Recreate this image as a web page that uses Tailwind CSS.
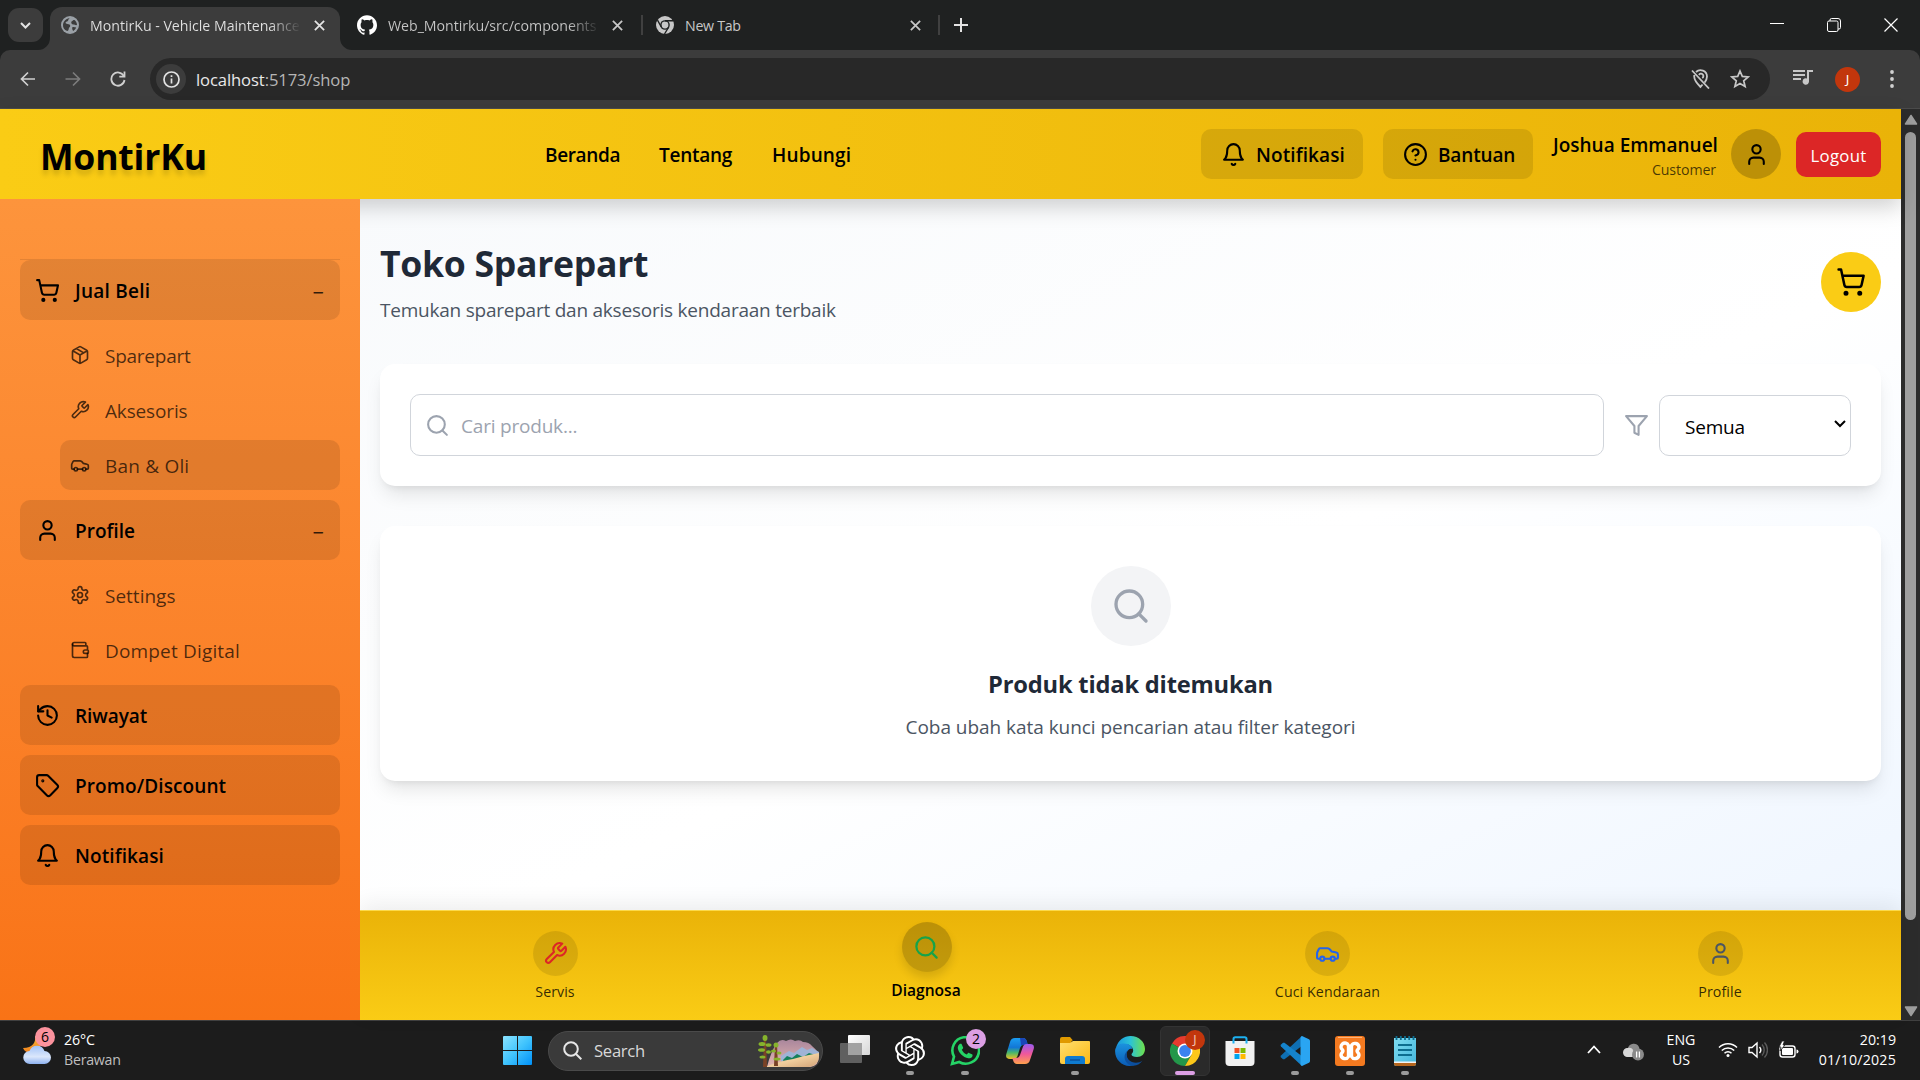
<!DOCTYPE html>
<html lang="id">
<head>
<meta charset="utf-8">
<title>MontirKu - Vehicle Maintenance</title>
<script src="https://cdn.jsdelivr.net/npm/@tailwindcss/browser@4"></script>
</head>
<body class="flex h-[1080px] w-[1920px] flex-col overflow-hidden bg-[#1c1c1c] font-['Open_Sans','Noto_Sans',sans-serif] text-[19px] leading-[30px] text-black">
<svg class="absolute size-0">
  <defs>
    <symbol id="bell" viewBox="0 0 24 24"><path d="M6 8a6 6 0 0 1 12 0c0 7 3 9 3 9H3s3-2 3-9"/><path d="M10.3 21a1.94 1.94 0 0 0 3.4 0"/></symbol>
    <symbol id="help" viewBox="0 0 24 24"><circle cx="12" cy="12" r="10"/><path d="M9.09 9a3 3 0 0 1 5.83 1c0 2-3 3-3 3M12 17h.01"/></symbol>
    <symbol id="user" viewBox="0 0 24 24"><path d="M19 21v-2a4 4 0 0 0-4-4H9a4 4 0 0 0-4 4v2"/><circle cx="12" cy="7" r="4"/></symbol>
    <symbol id="cart" viewBox="0 0 24 24"><circle cx="8" cy="21" r="1"/><circle cx="19" cy="21" r="1"/><path d="M2.05 2.05h2l2.66 12.42a2 2 0 0 0 2 1.58h9.78a2 2 0 0 0 1.95-1.57l1.65-7.43H5.12"/></symbol>
    <symbol id="package" viewBox="0 0 24 24"><path d="m7.5 4.27 9 5.15M21 8a2 2 0 0 0-1-1.73l-7-4a2 2 0 0 0-2 0l-7 4A2 2 0 0 0 3 8v8a2 2 0 0 0 1 1.73l7 4a2 2 0 0 0 2 0l7-4A2 2 0 0 0 21 16ZM3.3 7l8.7 5 8.7-5M12 22V12"/></symbol>
    <symbol id="wrench" viewBox="0 0 24 24"><path d="M14.7 6.3a1 1 0 0 0 0 1.4l1.6 1.6a1 1 0 0 0 1.4 0l3.77-3.77a6 6 0 0 1-7.94 7.94l-6.91 6.91a2.12 2.12 0 0 1-3-3l6.91-6.91a6 6 0 0 1 7.94-7.94l-3.76 3.76z"/></symbol>
    <symbol id="car" viewBox="0 0 24 24"><path d="M19 17h2c.6 0 1-.4 1-1v-3c0-.9-.7-1.7-1.5-1.9C18.7 10.6 16 10 16 10s-1.3-1.4-2.2-2.3c-.5-.4-1.1-.7-1.8-.7H5c-.6 0-1.1.4-1.4.9l-1.4 2.9A3.7 3.7 0 0 0 2 12v4c0 .6.4 1 1 1h2M9 17h6"/><circle cx="7" cy="17" r="2"/><circle cx="17" cy="17" r="2"/></symbol>
    <symbol id="settings" viewBox="0 0 24 24"><path d="M12.22 2h-.44a2 2 0 0 0-2 2v.18a2 2 0 0 1-1 1.73l-.43.25a2 2 0 0 1-2 0l-.15-.08a2 2 0 0 0-2.73.73l-.22.38a2 2 0 0 0 .73 2.73l.15.1a2 2 0 0 1 1 1.72v.51a2 2 0 0 1-1 1.74l-.15.09a2 2 0 0 0-.73 2.73l.22.38a2 2 0 0 0 2.73.73l.15-.08a2 2 0 0 1 2 0l.43.25a2 2 0 0 1 1 1.73V20a2 2 0 0 0 2 2h.44a2 2 0 0 0 2-2v-.18a2 2 0 0 1 1-1.73l.43-.25a2 2 0 0 1 2 0l.15.08a2 2 0 0 0 2.73-.73l.22-.39a2 2 0 0 0-.73-2.73l-.15-.08a2 2 0 0 1-1-1.74v-.5a2 2 0 0 1 1-1.74l.15-.09a2 2 0 0 0 .73-2.73l-.22-.38a2 2 0 0 0-2.73-.73l-.15.08a2 2 0 0 1-2 0l-.43-.25a2 2 0 0 1-1-1.73V4a2 2 0 0 0-2-2z"/><circle cx="12" cy="12" r="3"/></symbol>
    <symbol id="wallet" viewBox="0 0 24 24"><path d="M19 7V4a1 1 0 0 0-1-1H5a2 2 0 0 0 0 4h15a1 1 0 0 1 1 1v4h-3a2 2 0 0 0 0 4h3a1 1 0 0 0 1-1v-2a1 1 0 0 0-1-1"/><path d="M3 5v14a2 2 0 0 0 2 2h15a1 1 0 0 0 1-1v-4"/></symbol>
    <symbol id="history" viewBox="0 0 24 24"><path d="M3 12a9 9 0 1 0 9-9 9.75 9.75 0 0 0-6.74 2.74L3 8"/><path d="M3 3v5h5M12 7v5l4 2"/></symbol>
    <symbol id="tag" viewBox="0 0 24 24"><path d="M12.586 2.586A2 2 0 0 0 11.172 2H4a2 2 0 0 0-2 2v7.172a2 2 0 0 0 .586 1.414l8.704 8.704a2.426 2.426 0 0 0 3.42 0l6.58-6.58a2.426 2.426 0 0 0 0-3.42z"/><circle cx="7.5" cy="7.5" r=".5" fill="currentColor"/></symbol>
    <symbol id="search" viewBox="0 0 24 24"><circle cx="11" cy="11" r="8"/><path d="m21 21-4.3-4.3"/></symbol>
    <symbol id="filter" viewBox="0 0 24 24"><path d="M22 3H2l8 9.46V19l4 2v-8.54z"/></symbol>
    <symbol id="x" viewBox="0 0 10 10"><path d="m.8.8 8.4 8.4M9.2.8.8 9.2"/></symbol>
    <linearGradient id="gWin" x1="0" y1="0" x2="1" y2="1"><stop stop-color="#8be3ff"/><stop offset=".5" stop-color="#41c4fd"/><stop offset="1" stop-color="#0091f8"/></linearGradient>
    <linearGradient id="gTv" x1="0" y1="0" x2="1" y2="1"><stop stop-color="#fff"/><stop offset="1" stop-color="#d6d6d6"/></linearGradient>
    <linearGradient id="gCpA" x1="0" y1="0" x2="0" y2="1"><stop stop-color="#1b9df2"/><stop offset=".45" stop-color="#1277d6"/><stop offset=".7" stop-color="#49b86a"/><stop offset="1" stop-color="#f2c021"/></linearGradient>
    <linearGradient id="gCpB" x1="0" y1="0" x2="0" y2="1"><stop stop-color="#9a5bf0"/><stop offset=".5" stop-color="#f0589a"/><stop offset="1" stop-color="#ffa14d"/></linearGradient>
    <linearGradient id="gFold" x1="0" y1="0" x2="1" y2="1"><stop stop-color="#ffdf70"/><stop offset="1" stop-color="#fcb813"/></linearGradient>
    <linearGradient id="gEdge" x1="0" y1="0" x2="1" y2="0"><stop stop-color="#1795e0"/><stop offset=".5" stop-color="#2cc3d5"/><stop offset="1" stop-color="#6fe04a"/></linearGradient>
    <linearGradient id="gEdge2" x1="0" y1="0" x2="0" y2="1"><stop stop-color="#1b92de"/><stop offset="1" stop-color="#0a5bb5"/></linearGradient>
    <linearGradient id="gNote" x1="0" y1="0" x2="1" y2="1"><stop stop-color="#7fdcf0"/><stop offset="1" stop-color="#43b6dc"/></linearGradient>
    <linearGradient id="gCloud" x1="0" y1="0" x2="0" y2="1"><stop stop-color="#a3c4f8"/><stop offset=".6" stop-color="#dbe7fb"/><stop offset="1" stop-color="#8eb2f0"/></linearGradient>
    <linearGradient id="gMoon" x1="0" y1="0" x2="0" y2="1"><stop stop-color="#f9b83b"/><stop offset="1" stop-color="#f07f1a"/></linearGradient>
    <linearGradient id="gSky" x1="0" y1="0" x2="0" y2="1"><stop stop-color="#a9869c"/><stop offset="1" stop-color="#e6b7b0"/></linearGradient>
    <linearGradient id="gSand" x1="0" y1="0" x2="1" y2="1"><stop stop-color="#b98a63"/><stop offset=".5" stop-color="#f1cf9f"/><stop offset="1" stop-color="#d2a377"/></linearGradient>
  </defs>
</svg>

<!-- Browser tab strip -->
<div class="flex h-[50px] shrink-0 items-start bg-[#1f2121] text-[14.2px] leading-5 text-[#c7c7c7]">
  <div class="ml-2 mt-2 flex h-[34px] w-[35px] items-center justify-center rounded-[11px] bg-[#3c3c3c]">
    <svg class="h-[7px] w-[11px] fill-none stroke-[#e3e3e3] stroke-2" viewBox="0 0 11 7"><path d="m1 1 4.5 4.5L10 1"/></svg>
  </div>
  <div class="relative ml-[7px] mt-[7px] flex h-[43px] w-[290px] items-center rounded-t-[12px] bg-[#3c3c3c] pb-[7px] pl-[11px] pr-[15px] text-[#e3e3e3]">
    <svg class="absolute -left-3 bottom-0 size-3 fill-[#3c3c3c]" viewBox="0 0 12 12"><path d="M12 0v12H0A12 12 0 0 0 12 0"/></svg>
    <svg class="absolute -right-3 bottom-0 size-3 fill-[#3c3c3c]" viewBox="0 0 12 12"><path d="M0 0v12h12A12 12 0 0 1 0 0"/></svg>
    <svg class="size-[18px] shrink-0" viewBox="0 0 18 18"><circle cx="9" cy="9" r="9" fill="#9aa0a6"/><path d="M9 2.2C6.500 3 8 4.800 6 5.500c-2 .4-1.800 2.200.4 2.400 1.800.2 3 .6 2.800 2 0 1.200-1.300 1-1.400 2.600 0 1.200-.8 2.300-1.500 2.600C3 14 1.800 11.500 2 8.500c.5-3.700 3.500-6.300 7-6.300M10.500 5.500c1.500-.8 1.600-1.600 3-1.400 1.500 1.400 2.500 3 2.500 5-1.500.5-2.500-.6-3.600-.6-1.700 0-2.700-1.800-1.900-3M11.600 11c1.200-.4 2.400.3 3.600.5-.6 1.500-1.700 2.700-3 3.400-1-.9-1.400-3.200-.6-3.900" fill="#3c3c3c"/></svg>
    <span class="ml-[11px] w-[211px] overflow-hidden whitespace-nowrap bg-linear-to-r from-[#e3e3e3] from-85% to-transparent bg-clip-text pt-[2px] tracking-[-0.03px] text-transparent">MontirKu - Vehicle Maintenance</span>
    <svg class="ml-auto size-[11px] stroke-current stroke-[1.6]"><use href="#x"/></svg>
  </div>
  <div class="flex h-[50px] w-[301px] items-center pl-[17px] pr-[18px]">
    <svg class="size-5 shrink-0 fill-white" viewBox="0 0 24 24"><path d="M12 .297c-6.630 0-12 5.373-12 12 0 5.303 3.438 9.800 8.205 11.385.6.113.82-.258.82-.577 0-.285-.01-1.040-.015-2.040-3.338.724-4.042-1.610-4.042-1.610C4.422 18.070 3.633 17.700 3.633 17.700c-1.087-.744.084-.729.084-.729 1.205.084 1.838 1.236 1.838 1.236 1.070 1.835 2.809 1.305 3.495.998.108-.776.417-1.305.76-1.605-2.665-.3-5.466-1.332-5.466-5.930 0-1.310.465-2.380 1.235-3.220-.135-.303-.54-1.523.105-3.176 0 0 1.005-.322 3.300 1.230.96-.267 1.980-.399 3-.405 1.020.006 2.040.138 3 .405 2.280-1.552 3.285-1.230 3.285-1.230.645 1.653.24 2.873.12 3.176.765.84 1.230 1.910 1.230 3.220 0 4.610-2.805 5.625-5.475 5.920.42.36.81 1.096.81 2.220 0 1.606-.015 2.896-.015 3.286 0 .315.21.69.825.57C20.565 22.092 24 17.592 24 12.297c0-6.627-5.373-12-12-12"/></svg>
    <span class="ml-[11px] w-[212px] overflow-hidden whitespace-nowrap bg-linear-to-r from-[#c7c7c7] from-85% to-transparent bg-clip-text pt-[2px] tracking-[-0.03px] text-transparent">Web_Montirku/src/components</span>
    <svg class="ml-auto size-[11px] stroke-current stroke-[1.6]"><use href="#x"/></svg>
  </div>
  <div class="mt-[15px] h-5 w-[2px] bg-[#404040]"></div>
  <div class="flex h-[50px] w-[295px] items-center pl-[13px] pr-[17px]">
    <svg class="size-[18px]" viewBox="0 0 18 18"><circle cx="9" cy="9" r="9" fill="#c7c7c7"/><circle cx="9" cy="9" r="4.8" fill="#1f2121"/><circle cx="9" cy="9" r="3.4" fill="#c7c7c7"/><path d="M9 4.800h8M5.300 11 1.500 4.200M12.700 11l-4.200 7" stroke="#1f2121" stroke-width="1.400"/></svg>
    <span class="ml-[11px] pt-[2px] tracking-[-0.3px]">New Tab</span>
    <svg class="ml-auto size-[11px] stroke-current stroke-[1.6]"><use href="#x"/></svg>
  </div>
  <div class="mt-[15px] h-5 w-[2px] bg-[#404040]"></div>
  <svg class="ml-[14px] mt-[18px] size-[14px] stroke-[#e3e3e3] stroke-2" viewBox="0 0 14 14"><path d="M7 0v14M0 7h14"/></svg>
  <div class="ml-auto flex h-[50px] items-center gap-[43px] pr-[22px]">
    <svg class="h-[14px] w-[14px] stroke-white" viewBox="0 0 14 14"><path d="M0 5.500h14"/></svg>
    <svg class="size-[14px] fill-none stroke-white" viewBox="0 0 14 14"><rect x=".5" y="3" width="10.500" height="10.500" rx="1.500"/><path d="M3 3V2A1.500 1.500 0 0 1 4.500.5H11A2.500 2.500 0 0 1 13.500 3v6.500A1.500 1.500 0 0 1 12 11h-1"/></svg>
    <svg class="size-[14px] stroke-white stroke-[1.2]" viewBox="0 0 14 14"><path d="m.5.5 13 13M13.500.5l-13 13"/></svg>
  </div>
</div>

<!-- Address bar -->
<div class="shrink-0 bg-[#1f2121]">
  <div class="flex h-[59px] items-start rounded-t-[10px] border-b border-[#4b4b4b] bg-[#3c3c3c] pt-2">
    <div class="flex h-[42px] w-[150px] items-center gap-[29px] pl-[20px]">
      <svg class="size-4 fill-none stroke-[#d0d0d0] stroke-[1.7]" viewBox="0 0 16 16"><path d="M15 8H1.500M8 1.500 1.500 8 8 14.500"/></svg>
      <svg class="size-4 fill-none stroke-[#7c7c7c] stroke-[1.7]" viewBox="0 0 16 16"><path d="M.5 8h14M8 1.500 14.500 8 8 14.500"/></svg>
      <svg class="size-4 fill-none stroke-[#d0d0d0] stroke-[1.8]" viewBox="0 0 16 16"><path d="M13.800 5A6.600 6.600 0 1 0 14.500 9"/><path d="M14.500.5v5.200H9.300"/></svg>
    </div>
    <div class="flex h-[42px] w-[1620px] items-center rounded-full bg-[#282828] pl-[6px] pr-5">
      <div class="flex size-[30px] items-center justify-center rounded-full bg-[#3c3c3c]">
        <svg class="size-[17px] fill-none stroke-[#e3e3e3] stroke-[1.7]" viewBox="0 0 17 17"><circle cx="8.500" cy="8.500" r="7.500"/><path d="M8.500 7.500v5M8.500 4.300V6"/></svg>
      </div>
      <span class="ml-[10px] pt-px text-[16.6px] tracking-[-0.1px] text-[#e8e8e8]">localhost<span class="text-[#b6b6b6]">:5173/shop</span></span>
      <svg class="ml-auto h-5 w-[19px] fill-none stroke-[#c7c7c7] stroke-[1.8]" viewBox="0 0 19 20"><path d="M5 3A6.500 6.500 0 0 1 16 7.500c0 2-.9 4-2.300 6M11.500 15.500l-2 2.500C6 14.500 3.200 11 3.200 7.500L3.300 6M1 1.500l17 18M8 6a2.300 2.300 0 1 1 3.200 3"/></svg>
      <svg class="ml-5 size-5 fill-none stroke-[#c7c7c7] stroke-[1.7]" viewBox="0 0 20 20"><path d="m10 2 2.300 5.400 5.900.5-4.500 3.900 1.400 5.700-5.100-3-5.100 3 1.400-5.700-4.500-3.900 5.900-.5z"/></svg>
    </div>
    <div class="flex h-[42px] items-center pl-[23px]">
      <svg class="mb-1 h-4 w-5 fill-[#c7c7c7]" viewBox="0 0 20 16"><path d="M0 1h12v2H0zM0 5h12v2H0zM0 9h8v2H0zM14 1h6v2h-4v9.500a3.200 3.200 0 1 1-2-3z"/></svg>
      <div class="ml-[22px] flex size-[25px] items-center justify-center rounded-full bg-[#c2360c] font-['Noto_Sans'] text-[13px] leading-4 text-white">J</div>
      <svg class="ml-[30px] h-[18px] w-1 fill-[#d0d0d0]" viewBox="0 0 4 18"><circle cx="2" cy="2" r="1.900"/><circle cx="2" cy="9" r="1.900"/><circle cx="2" cy="16" r="1.900"/></svg>
    </div>
  </div>
</div>

<!-- Page viewport -->
<div class="flex h-[911px] shrink-0">
  <div class="flex w-[1901px] flex-col">
    <header class="relative z-10 flex h-[90px] shrink-0 items-center bg-linear-to-r from-[#facc15] to-[#eab308] pl-[40px] pr-5 font-[560] shadow-[0_8px_20px_rgba(0,0,0,0.18)]">
      <div class="w-[505px] pt-1 text-[35.6px] font-bold tracking-[-0.2px] text-shadow-[0_5px_5px_rgba(0,0,0,0.15)]">MontirKu</div>
      <nav class="flex gap-10 pt-[2px]">
        <a class="w-[74px] whitespace-nowrap tracking-[-0.35px]">Beranda</a>
        <a class="w-[73px] whitespace-nowrap tracking-[-0.25px]">Tentang</a>
        <a class="whitespace-nowrap tracking-[0.15px]">Hubungi</a>
      </nav>
      <div class="ml-auto flex items-center">
        <div class="flex h-[50px] w-[162px] items-center gap-[10px] rounded-[10px] bg-black/10 pl-5"><svg class="size-[25px] fill-none stroke-current stroke-2 [stroke-linecap:round] [stroke-linejoin:round]"><use href="#bell"/></svg><span class="pt-[2px] tracking-[0.1px]">Notifikasi</span></div>
        <div class="ml-5 flex h-[50px] w-[150px] items-center gap-[10px] rounded-[10px] bg-black/10 pl-5"><svg class="size-[25px] fill-none stroke-current stroke-2 [stroke-linecap:round] [stroke-linejoin:round]"><use href="#help"/></svg><span class="pt-[2px] tracking-[-0.15px]">Bantuan</span></div>
        <div class="ml-5 w-[163px] whitespace-nowrap pt-[2px] text-right">
          <div>Joshua Emmanuel</div>
          <div class="text-[14.2px] font-normal leading-5 tracking-[-0.1px] text-black/70">Customer</div>
        </div>
        <div class="ml-[15px] flex size-[50px] items-center justify-center rounded-full bg-black/20"><svg class="size-[25px] fill-none stroke-current stroke-2 [stroke-linecap:round] [stroke-linejoin:round]"><use href="#user"/></svg></div>
        <div class="ml-[15px] flex h-[45px] w-[85px] items-center justify-center rounded-[10px] bg-[#dc2626] pt-[3px] text-[16.8px] font-normal tracking-[0.25px] text-white">Logout</div>
      </div>
    </header>
    <div class="flex min-h-0 flex-1">
      <aside class="relative z-20 flex w-[360px] shrink-0 flex-col bg-linear-to-b from-[#fd943c] to-[#f97316] px-5 pt-[60px] font-[560]">
        <div class="h-px bg-black/10"></div>
        <div class="flex h-[60px] items-center rounded-[10px] bg-black/10 px-[15px]"><svg class="size-[25px] fill-none stroke-current stroke-2 [stroke-linecap:round] [stroke-linejoin:round]"><use href="#cart"/></svg><span class="ml-[15px] pt-[2px] tracking-[0.25px]">Jual Beli</span><span class="ml-auto mr-px pt-[5px] text-[20px] font-normal text-black/80">−</span></div>
        <div class="my-[10px] ml-10 flex flex-col gap-[5px] font-normal text-black/70">
          <div class="flex h-[50px] items-center pl-[10px]"><svg class="size-5 fill-none stroke-current stroke-2 [stroke-linecap:round] [stroke-linejoin:round]"><use href="#package"/></svg><span class="ml-[15px] pt-[2px] tracking-[-0.25px]">Sparepart</span></div>
          <div class="flex h-[50px] items-center pl-[10px]"><svg class="size-5 fill-none stroke-current stroke-2 [stroke-linecap:round] [stroke-linejoin:round]"><use href="#wrench"/></svg><span class="ml-[15px] pt-[2px] tracking-[-0.15px]">Aksesoris</span></div>
          <div class="flex h-[50px] items-center rounded-[10px] bg-black/10 pl-[10px]"><svg class="size-5 fill-none stroke-current stroke-2 [stroke-linecap:round] [stroke-linejoin:round]"><use href="#car"/></svg><span class="ml-[15px] pt-[2px] tracking-[0.2px]">Ban &amp; Oli</span></div>
        </div>
        <div class="flex h-[60px] items-center rounded-[10px] bg-black/10 px-[15px]"><svg class="size-[25px] fill-none stroke-current stroke-2 [stroke-linecap:round] [stroke-linejoin:round]"><use href="#user"/></svg><span class="ml-[15px] pt-[2px]">Profile</span><span class="ml-auto mr-px pt-[5px] text-[20px] font-normal text-black/80">−</span></div>
        <div class="my-[10px] ml-10 flex flex-col gap-[5px] font-normal text-black/70">
          <div class="flex h-[50px] items-center pl-[10px]"><svg class="size-5 fill-none stroke-current stroke-2 [stroke-linecap:round] [stroke-linejoin:round]"><use href="#settings"/></svg><span class="ml-[15px] pt-[2px]">Settings</span></div>
          <div class="flex h-[50px] items-center pl-[10px]"><svg class="size-5 fill-none stroke-current stroke-2 [stroke-linecap:round] [stroke-linejoin:round]"><use href="#wallet"/></svg><span class="ml-[15px] pt-[2px] tracking-[0.17px]">Dompet Digital</span></div>
        </div>
        <div class="flex flex-col gap-[10px]">
          <div class="flex h-[60px] items-center rounded-[10px] bg-black/10 px-[15px]"><svg class="size-[25px] fill-none stroke-current stroke-2 [stroke-linecap:round] [stroke-linejoin:round]"><use href="#history"/></svg><span class="ml-[15px] pt-[2px] tracking-[-0.05px]">Riwayat</span></div>
          <div class="flex h-[60px] items-center rounded-[10px] bg-black/10 px-[15px]"><svg class="size-[25px] fill-none stroke-current stroke-2 [stroke-linecap:round] [stroke-linejoin:round]"><use href="#tag"/></svg><span class="ml-[15px] pt-[2px] tracking-[0.1px]">Promo/Discount</span></div>
          <div class="flex h-[60px] items-center rounded-[10px] bg-black/10 px-[15px]"><svg class="size-[25px] fill-none stroke-current stroke-2 [stroke-linecap:round] [stroke-linejoin:round]"><use href="#bell"/></svg><span class="ml-[15px] pt-[2px] tracking-[0.1px]">Notifikasi</span></div>
        </div>
      </aside>
      <div class="flex flex-1 flex-col">
        <main class="flex-1 bg-linear-to-br from-[#f8fafc] via-white via-55% to-[#eff6ff] px-5 pt-10">
          <div class="flex h-[85px] items-center justify-between">
            <div class="pt-[3px]">
              <h1 class="mb-[9px] text-[35.6px] font-bold leading-[45px] tracking-[-0.3px] text-[#1f2937]">Toko Sparepart</h1>
              <p class="tracking-[-0.23px] text-[#4b5563]">Temukan sparepart dan aksesoris kendaraan terbaik</p>
            </div>
            <div class="flex size-[60px] items-center justify-center rounded-full bg-[#facc15]"><svg class="size-[30px] fill-none stroke-current stroke-2 [stroke-linecap:round] [stroke-linejoin:round]"><use href="#cart"/></svg></div>
          </div>
          <div class="mt-10 flex h-[122px] items-center rounded-[15px] bg-white px-[30px] shadow-[0_12px_19px_-4px_rgba(0,0,0,0.1),0_5px_8px_-5px_rgba(0,0,0,0.1)]">
            <div class="flex h-[62px] w-[1194px] items-center rounded-[10px] border border-[#d1d5db] pl-[14px] text-[#9ca3af]">
              <svg class="size-[25px] fill-none stroke-current stroke-2 [stroke-linecap:round] [stroke-linejoin:round]"><use href="#search"/></svg>
              <span class="ml-[11px] pt-[2px] tracking-[-0.2px]">Cari produk...</span>
            </div>
            <svg class="ml-5 size-[25px] fill-none stroke-[#9ca3af] stroke-2 [stroke-linecap:round] [stroke-linejoin:round]"><use href="#filter"/></svg>
            <div class="ml-[10px] mt-px flex h-[61px] w-[192px] items-center justify-between rounded-[10px] border border-[#d1d5db] pl-[25px] pr-1">
              <span class="pt-[2px] tracking-[-0.2px]">Semua</span>
              <svg class="mb-1 h-[8px] w-3 fill-none stroke-black stroke-2" viewBox="0 0 12 8"><path d="m1 1 5 5 5-5"/></svg>
            </div>
          </div>
          <div class="mt-10 flex h-[255px] flex-col items-center rounded-[15px] bg-white pt-10 shadow-[0_12px_19px_-4px_rgba(0,0,0,0.1),0_5px_8px_-5px_rgba(0,0,0,0.1)]">
            <div class="flex size-20 items-center justify-center rounded-full bg-[#f3f4f6]"><svg class="size-10 fill-none stroke-[#9ca3af] stroke-2 [stroke-linecap:round] [stroke-linejoin:round]"><use href="#search"/></svg></div>
            <h3 class="mt-[21px] text-[23.7px] font-bold leading-[35px] tracking-[-0.2px] text-[#1f2937]">Produk tidak ditemukan</h3>
            <p class="mt-[10px] tracking-[-0.04px] text-[#4b5563]">Coba ubah kata kunci pencarian atau filter kategori</p>
          </div>
        </main>
        <div class="relative grid h-[110px] shrink-0 grid-cols-[390px_352px_451px_334px] border-t border-[#fbd94a] bg-linear-to-b from-[#eab308] to-[#facc15] pt-5 text-[14.2px] font-medium leading-5 text-black/80 shadow-[0_-6px_20px_rgba(0,0,0,0.07)]">
          <div class="flex flex-col items-center"><div class="flex size-[45px] items-center justify-center rounded-full bg-black/10"><svg class="size-[25px] fill-none stroke-[#dc2626] stroke-2 [stroke-linecap:round] [stroke-linejoin:round]"><use href="#wrench"/></svg></div><span class="mt-[6px] tracking-[0.05px]">Servis</span></div>
          <div class="-mt-[9px] flex flex-col items-center text-black"><div class="ml-px flex size-[50px] items-center justify-center rounded-full bg-black/20 shadow-[0_6px_10px_rgba(0,0,0,0.12)]"><svg class="size-[27px] fill-none stroke-[#16a34a] stroke-2 [stroke-linecap:round] [stroke-linejoin:round]"><use href="#search"/></svg></div><span class="mt-[8px] text-[15.6px] font-[550]">Diagnosa</span></div>
          <div class="flex flex-col items-center"><div class="flex size-[45px] items-center justify-center rounded-full bg-black/10"><svg class="size-[25px] fill-none stroke-[#2563eb] stroke-2 [stroke-linecap:round] [stroke-linejoin:round]"><use href="#car"/></svg></div><span class="mt-[6px] tracking-[0.1px]">Cuci Kendaraan</span></div>
          <div class="flex flex-col items-center"><div class="flex size-[45px] items-center justify-center rounded-full bg-black/10"><svg class="size-[25px] fill-none stroke-[#4b5563] stroke-2 [stroke-linecap:round] [stroke-linejoin:round]"><use href="#user"/></svg></div><span class="mt-[6px] tracking-[0.1px]">Profile</span></div>
        </div>
      </div>
    </div>
  </div>
  <!-- Scrollbar -->
  <div class="flex flex-1 flex-col items-center bg-[#2c2c2c] pb-[3px] pt-[5px]">
    <svg class="h-[12px] w-[14px] fill-[#9f9f9f]" viewBox="0 0 14 12"><path d="M7 1.500 12.500 10h-11z" stroke="#9f9f9f" stroke-width="1.500" stroke-linejoin="round"/></svg>
    <div class="mt-[6px] h-[788px] w-[11px] rounded-full bg-[#9f9f9f]"></div>
    <svg class="mt-auto h-[12px] w-[14px] fill-[#9f9f9f]" viewBox="0 0 14 12"><path d="M7 10.500 12.500 2h-11z" stroke="#9f9f9f" stroke-width="1.500" stroke-linejoin="round"/></svg>
  </div>
</div>

<!-- Taskbar -->
<div class="flex h-[60px] items-center border-t border-[#404040] bg-[#1c1c1c] text-[14.2px] leading-5 text-white">
  <div class="relative ml-[22px] flex w-[481px] items-center">
    <svg class="mb-[3px] size-[31px]" viewBox="0 0 31 31"><path d="M13 2c1 6-2 12-12 12 2 5 9 7 14 3s6-12-2-15" fill="url(#gMoon)"/><path d="M8 30a6.500 6.500 0 0 1-.5-13 8 8 0 0 1 15 0 6.500 6.500 0 0 1 0 13z" fill="url(#gCloud)"/></svg>
    <div class="absolute left-[13px] -top-[3px] flex size-5 items-center justify-center rounded-full bg-[#fb929d] text-[14px] text-black">6</div>
    <div class="ml-[11px] pb-[2px]"><div class="tracking-[-0.1px]">26°C</div><div class="text-[#bfbfbf] tracking-[-0.25px]">Berawan</div></div>
  </div>
  <svg class="size-[29px] fill-[url(#gWin)]" viewBox="0 0 29 29"><path d="M1 0h13v14H0V1a1 1 0 0 1 1-1M15 0h13a1 1 0 0 1 1 1v13H15zM0 15h14v14H1a1 1 0 0 1-1-1zM15 15h14v13a1 1 0 0 1-1 1H15z"/></svg>
  <div class="ml-4 flex h-10 w-[275px] items-center rounded-full border border-[#4a4a4a] bg-[#3a3a3a] pl-[14px] pr-[2px]">
    <svg class="size-[19px] fill-none stroke-[#e6e6e6] stroke-2" viewBox="0 0 19 19"><circle cx="8" cy="8" r="6.800"/><path d="m13 13 5.300 5.300"/></svg>
    <span class="ml-3 text-[16.6px] tracking-[-0.27px] text-[#d8d8d8]">Search</span>
    <svg class="ml-auto h-[34px] w-[63px]" viewBox="0 0 63 34">
      <path d="M20 9q4-5 9-2 5-3 9 0 5-2 8 1 6 0 9 4 7 6 7 10 0 10-9 11H10q4-16 10-24" fill="url(#gSky)"/>
      <path d="m24 22 8-5 5 2 8-6 5 3 5-2 7 4v4l-38 6z" fill="#9fb3d6"/><path d="m26 26 4-4 5 2 5-4 6 3 6-4 10 3-12 5-22 4z" fill="#14805c"/>
      <path d="M8 33q14-6 28-8 14-4 26-6 1 12-10 14z" fill="url(#gSand)"/>
      <path d="M7 4h2l1 29H6zM18 10h2l1 22h-4z" fill="#7a4226"/>
      <g fill="#86b32c"><ellipse cx="8" cy="4" rx="2.500" ry="3"/><ellipse cx="5" cy="10" rx="3.500" ry="2"/><ellipse cx="11.500" cy="11" rx="3" ry="1.800"/><ellipse cx="4.500" cy="16" rx="3.500" ry="1.800"/><ellipse cx="11.500" cy="18" rx="2.500" ry="1.700"/><ellipse cx="5.500" cy="23" rx="3" ry="1.600"/><ellipse cx="19" cy="11" rx="2.500" ry="2.500"/><ellipse cx="16.500" cy="17" rx="2.500" ry="1.500"/><ellipse cx="22" cy="19" rx="2.500" ry="1.500"/><ellipse cx="20" cy="25" rx="3.500" ry="1.500"/></g>
    </svg>
  </div>
  <div class="ml-1 flex">
    <div class="flex h-[50px] w-[55px] items-center justify-center"><svg class="mb-[3px] h-7 w-[30px]" viewBox="0 0 30 28"><rect y="8" width="22" height="20" rx="1" fill="#606060"/><rect x="8" width="22" height="20" rx="1" fill="url(#gTv)"/><path d="M8 8h14v12H8z" fill="#a2a2a2"/></svg></div>
    <div class="relative flex h-[50px] w-[55px] items-center justify-center"><svg class="size-[30px] fill-white" viewBox="0 0 24 24"><path d="M22.2819 9.8211a5.9847 5.9847 0 0 0-.5157-4.9108 6.0462 6.0462 0 0 0-6.5098-2.900A6.0651 6.0651 0 0 0 4.9807 4.1818a5.9847 5.9847 0 0 0-3.9977 2.900 6.0462 6.0462 0 0 0 .7427 7.0966 5.980 5.980 0 0 0 .511 4.9107 6.051 6.051 0 0 0 6.5146 2.9001A5.9847 5.9847 0 0 0 13.2599 24a6.0557 6.0557 0 0 0 5.7718-4.2058 5.9894 5.9894 0 0 0 3.9977-2.9001 6.0557 6.0557 0 0 0-.7475-7.0729zm-9.022 12.6081a4.4755 4.4755 0 0 1-2.8764-1.0408l.1419-.0804 4.7783-2.7582a.7948.7948 0 0 0 .3927-.6813v-6.7369l2.020 1.1686a.071.071 0 0 1 .038.052v5.5826a4.504 4.504 0 0 1-4.4945 4.4944zm-9.6607-4.1254a4.4708 4.4708 0 0 1-.5346-3.0137l.142.0852 4.783 2.7582a.7712.7712 0 0 0 .7806 0l5.8428-3.3685v2.3324a.0804.0804 0 0 1-.0332.0615L9.740 19.9502a4.4992 4.4992 0 0 1-6.1408-1.6464zM2.3408 7.8956a4.485 4.485 0 0 1 2.3655-1.9728V11.600a.7664.7664 0 0 0 .3879.6765l5.8144 3.3543-2.0201 1.1685a.0757.0757 0 0 1-.071 0l-4.8303-2.7865A4.504 4.504 0 0 1 2.3408 7.872zm16.5963 3.8558L13.1038 8.364 15.1192 7.200a.0757.0757 0 0 1 .071 0l4.8303 2.7913a4.4944 4.4944 0 0 1-.6765 8.1042v-5.6772a.790.790 0 0 0-.407-.667zm2.0107-3.0231l-.142-.0852-4.7735-2.7818a.7759.7759 0 0 0-.7854 0L9.409 9.2297V6.8974a.0662.0662 0 0 1 .0284-.0615l4.8303-2.7866a4.4992 4.4992 0 0 1 6.6802 4.660zM8.3065 12.863l-2.020-1.1638a.0804.0804 0 0 1-.038-.0567V6.0742a4.4992 4.4992 0 0 1 7.3757-3.4537l-.142.0805L8.704 5.459a.7948.7948 0 0 0-.3927.6813zm1.0976-2.3654l2.602-1.4998 2.6069 1.4998v2.9994l-2.5974 1.4997-2.6067-1.4997Z"/></svg><div class="absolute bottom-[1px] left-[24px] h-1 w-2 rounded-full bg-[#9a9a9a]"></div></div>
    <div class="relative flex h-[50px] w-[55px] items-center justify-center"><svg class="size-[30px]" viewBox="0 0 30 30"><path d="M2 28 4 20.700A13.300 13.300 0 1 1 9.200 26z" fill="none" stroke="#25d366" stroke-width="2.600"/><path d="M10.500 7.800c.5 0 1 0 1.300.7l1.300 3c.2.6-.1 1-1.300 2.300 1.200 2.400 2.700 3.700 5 4.700 1.200-1.500 1.500-1.900 2.200-1.600l2.900 1.400c.8.4.8.8.5 1.900-.6 1.500-2.300 2.300-4.100 2.100C13 21.500 8.300 16.500 7.800 12.300c-.2-2 1.200-4.500 2.700-4.500" fill="#25d366"/></svg><div class="absolute left-[29px] top-[3px] flex size-5 items-center justify-center rounded-full bg-[#dc9fe4] text-[14px] text-black">2</div><div class="absolute bottom-[1px] left-[24px] h-1 w-2 rounded-full bg-[#9a9a9a]"></div></div>
    <div class="flex h-[50px] w-[55px] items-center justify-center"><svg class="h-[26px] w-7" viewBox="0 0 28 26"><path d="M9 0h8q3 0 4 4l.8 3H17q-2 0-3 3l-2.500 8q-1 3-4 3H4q-5 0-3.700-5L4 4q1-4 5-4" fill="url(#gCpA)"/><path d="M14 0h3q3 0 4 4l.8 3H15z" fill="#1a46b8"/><path d="M19 26h-8q-3 0-4-4l-.8-2H10q3 0 4-3l2.500-7q1-4 4-4H24q5 0 3.700 5L24 22q-1 4-5 4" fill="url(#gCpB)"/></svg></div>
    <div class="relative flex h-[50px] w-[55px] items-center justify-center"><svg class="h-[27px] w-[30px]" viewBox="0 0 30 27"><path d="M0 2q0-2 2-2h8l3 3.500h-1L10 8H0z" fill="#e09a00"/><path d="M0 6h10l3-2h16q1 0 1 1v20q0 2-2 2H2q-2 0-2-2z" fill="url(#gFold)"/><path d="M5 27v-5q0-3 3-3h14q3 0 3 3v5z" fill="#0f7bd0"/><path d="M10 23h10" stroke="#0a4d96" stroke-width="1.300"/></svg><div class="absolute bottom-[1px] left-[24px] h-1 w-2 rounded-full bg-[#9a9a9a]"></div></div>
    <div class="flex h-[50px] w-[55px] items-center justify-center"><svg class="size-[30px]" viewBox="0 0 30 30"><path d="M1 12C3 4 9 0 15.500 0 24 0 30 6 30 13c0 5-3.500 8-8 8-3.500 0-5.500-1.200-5.500-2.500 0-1 1.700-1.500 1.700-4C18 10 13 8 9 8c-4 0-7 2-8 4" fill="url(#gEdge)"/><path d="M.2 13.500C1.500 9.500 5 7.600 9 7.600c5 0 8.500 3 8.500 6.200 0-2-6-1-6 5C11.500 24 16 28 21 28c-2 1.300-4 2-6.500 2C6 30-.8 22 .2 13.500" fill="url(#gEdge2)"/><path d="M12.500 14.500c-2 4-1 9 4.500 11.500 4 1.600 8 .5 10.500-1.500-2 3-5 5-9 5.200-7 .3-12.500-9-6-15.200" fill="#0c4f9e"/></svg></div>
    <div class="relative flex h-[50px] w-[55px] items-center justify-center"><div class="absolute left-[3px] top-0 h-[50px] w-[50px] rounded-[6px] border border-[#333] bg-[#2a2a2a]"></div><svg class="relative size-[30px]" viewBox="0 0 30 30"><path d="M15 15 2 7.500A15 15 0 0 1 28 7.500H15z" fill="#e53b2f"/><path d="M15 15 2 7.500A15 15 0 0 0 15 30l6.500-11.500z" fill="#23974a"/><path d="M15 7.500h13A15 15 0 0 1 15 30l6.500-11.300z" fill="#fcc719"/><circle cx="15" cy="15" r="7.500" fill="#fff"/><circle cx="15" cy="15" r="5.900" fill="#3b82ef"/></svg><div class="absolute left-[28px] top-[4px] flex size-5 items-center justify-center rounded-full bg-[#c2360c] font-['Noto_Sans'] text-[12px] leading-4 text-[#f3c4b5]">J</div><div class="absolute bottom-[1px] left-[18px] h-1 w-5 rounded-full bg-[#dc9fe4]"></div></div>
    <div class="flex h-[50px] w-[55px] items-center justify-center"><svg class="size-[30px]" viewBox="0 0 30 30"><path d="M8.500 8V3q0-1.800 1.800-1.800h9.400q1.800 0 1.800 1.800v5" fill="none" stroke="#1cb0f0" stroke-width="2"/><path d="M.5 5h29v21q0 4-4 4h-21q-4 0-4-4z" fill="#f1f1f1"/><path d="M9.500 12h5v5h-5z" fill="#f25022"/><path d="M15.500 12h5v5h-5z" fill="#7fba00"/><path d="M9.500 18h5v5h-5z" fill="#00a4ef"/><path d="M15.500 18h5v5h-5z" fill="#ffb900"/><path d="M8.500 5v2.500M21.500 5v2.500" stroke="#1cb0f0" stroke-width="2"/></svg></div>
    <div class="relative flex h-[50px] w-[55px] items-center justify-center"><svg class="size-[30px]" viewBox="0 0 30 30"><path d="M22 0 1 19.500l-.5 1.500L3 23.300l1.500-.1L23 9z" fill="#0f6fb3"/><path d="M22 30 1 10.500.5 9 3 6.700l1.500.1L23 21z" fill="#1583cb"/><path d="M22 0 29 3.300q1 .6 1 1.700v20q0 1.200-1 1.700L22 30q-1.500-.3-1.500-2V2q0-1.700 1.500-2" fill="#2aa5f2"/></svg><div class="absolute bottom-[1px] left-[24px] h-1 w-2 rounded-full bg-[#9a9a9a]"></div></div>
    <div class="relative flex h-[50px] w-[55px] items-center justify-center"><svg class="size-[30px]" viewBox="0 0 30 30"><rect width="30" height="30" rx="3" fill="#f47a20"/><path d="M3 1.500h24" stroke="#fbb27a"/><path d="M10.500 7a4 4 0 0 0-4.500 4c0 2.500 2 2.500 2 4s-2 1.500-2 4a4 4 0 0 0 7.500 1.500V16.500h3v4A4 4 0 0 0 24 19c0-2.500-2-2.500-2-4s2-1.500 2-4a4 4 0 0 0-7.500-1.500V13h-3V9.500A4 4 0 0 0 10.500 7" fill="none" stroke="#fff" stroke-width="3.400"/></svg><div class="absolute bottom-[1px] left-[24px] h-1 w-2 rounded-full bg-[#9a9a9a]"></div></div>
    <div class="relative flex h-[50px] w-[55px] items-center justify-center"><svg class="h-[30px] w-[22px]" viewBox="0 0 22 30"><path d="M0 2h22v26q0 2-2 2H2q-2 0-2-2z" fill="url(#gNote)"/><path d="M0 26.500h22V28q0 2-2 2H2q-2 0-2-2z" fill="#b5651d"/><path d="M0 25.500h22v1.500H0z" fill="#f2f2f2"/><path d="M2.500 0v4M6.800 0v4M11 0v4M15.200 0v4M19.500 0v4" stroke="#0c6d8f" stroke-width="1.800"/><path d="M4 9h14M4 14h14M4 19h14" stroke="#0c6d8f" stroke-width="1.800"/></svg><div class="absolute bottom-[1px] left-[24px] h-1 w-2 rounded-full bg-[#9a9a9a]"></div></div>
  </div>
  <div class="ml-auto flex items-center pb-[2px] pr-6">
    <svg class="mr-[-2px] h-[9px] w-[14px] fill-none stroke-white stroke-[1.8]" viewBox="0 0 14 9"><path d="m1 8 6-6.500L13 8"/></svg>
    <svg class="ml-[24px] mt-1 h-[19px] w-[21px]" viewBox="0 0 21 19"><path d="M5 15a4.600 4.600 0 0 1 0-9 6 6 0 0 1 11-1l1 4-6 6z" fill="#8a8a8a"/><path d="M4.500 15a4.500 4.500 0 0 1 0-9 5 5 0 0 1 6 3l-1 6z" fill="#d8d8d8"/><circle cx="15" cy="12.500" r="6" fill="#8a8a8a"/><path d="M13.600 9.500v6M16.400 9.500v6" stroke="#fff" stroke-width="1.300"/></svg>
    <div class="ml-[22px] w-[30px] text-center"><div>ENG</div><div>US</div></div>
    <svg class="ml-[22px] h-[17px] w-5 fill-none stroke-white stroke-[1.5]" viewBox="0 0 20 17"><path d="M1 6.500a12.500 12.500 0 0 1 18 0M3.800 9.500a8.700 8.700 0 0 1 12.400 0M6.500 12.300a5 5 0 0 1 7 0"/><circle cx="10" cy="14.500" r="1.500" fill="#fff" stroke="none"/></svg>
    <svg class="ml-[10px] h-[18px] w-5 fill-none stroke-white stroke-[1.4]" viewBox="0 0 20 18"><path d="M1 6.500v5h3l5 4.500V2L4 6.500z"/><path d="M11.500 6a4.500 4.500 0 0 1 0 6"/><path d="M14 3.500a8 8 0 0 1 0 11M16.500 1.500a11 11 0 0 1 0 15" stroke="#5a5a5a"/></svg>
    <svg class="ml-[10px] h-[18px] w-[21px]" viewBox="0 0 21 18"><rect x="2" y="5" width="15" height="11" rx="2.500" fill="none" stroke="#fff" stroke-width="1.400"/><rect x="4" y="7" width="11" height="7" rx="1" fill="#fff"/><path d="M18.500 8.500q2 0 2 2t-2 2z" fill="#fff"/><path d="M4 0 1 6h2l-1 4 5-6H5l1.500-4z" fill="#fff" stroke="#1c1c1c" stroke-width=".8"/></svg>
    <div class="ml-[19px] w-[78px] whitespace-nowrap text-right"><div>20:19</div><div class="tracking-[0.2px]">01/10/2025</div></div>
  </div>
</div>
</body>
</html>
